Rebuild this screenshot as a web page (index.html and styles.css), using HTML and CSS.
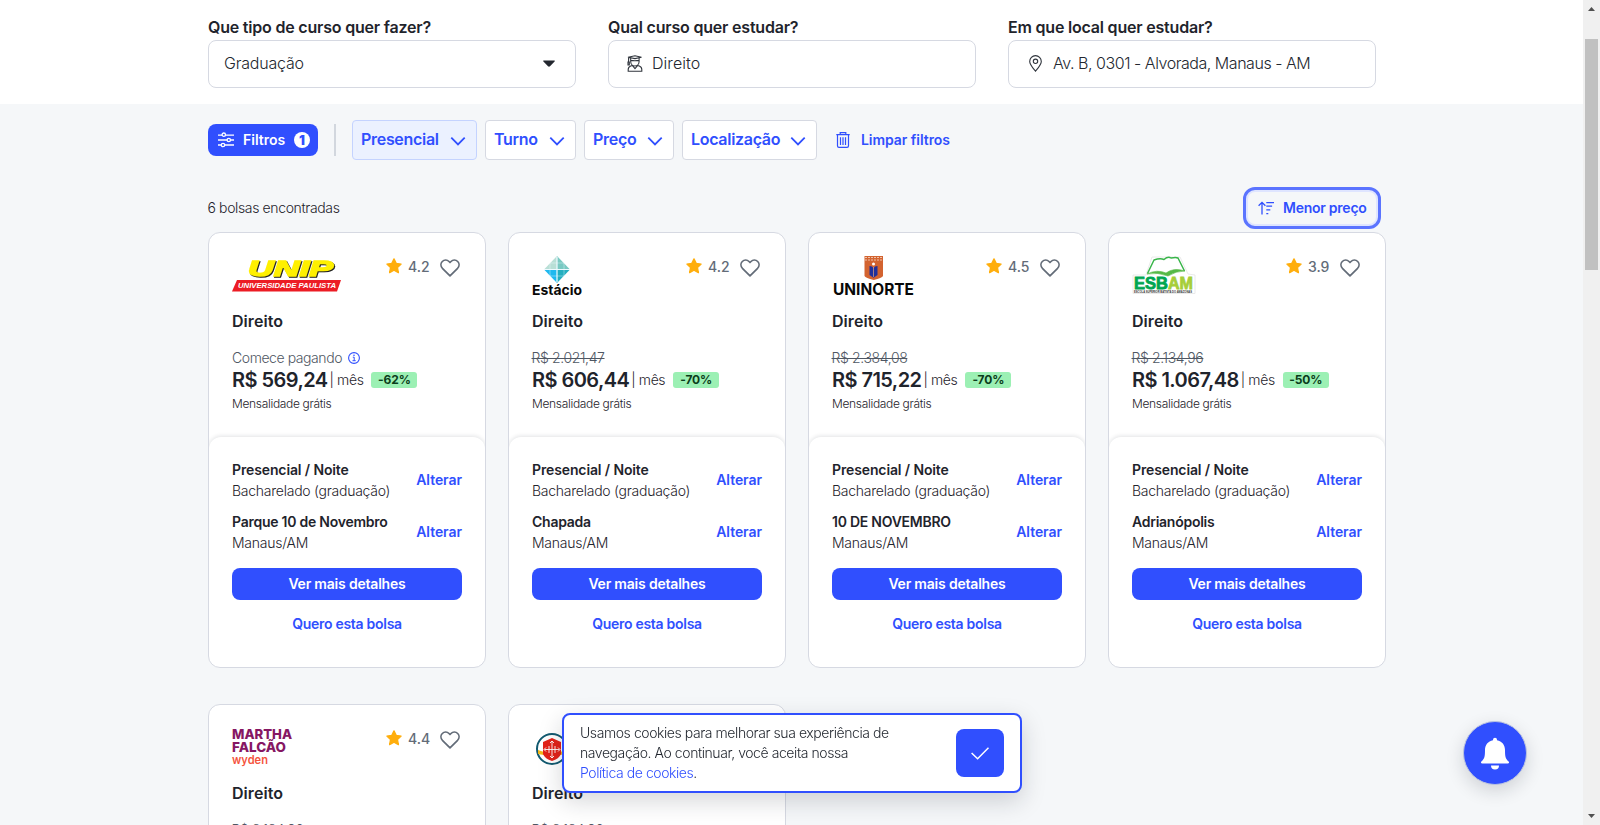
FILE: index.html
```html
<!DOCTYPE html>
<html lang="pt-BR">
<head>
<meta charset="utf-8">
<title>Bolsas de estudo</title>
<link rel="stylesheet" href="styles.css">
</head>
<body>
<svg class="sprite" aria-hidden="true">
  <symbol id="star" viewBox="0 0 16 16"><path d="M8 .9l2.200 4.500 4.900.7-3.600 3.500.9 5L8 12.200l-4.400 2.400.9-5L.9 6.100l4.900-.7z" fill="#ffae0d" stroke="#ffae0d" stroke-width="1.300" stroke-linejoin="round"/></symbol>
  <symbol id="heart" viewBox="0 0 20 18"><path d="M10 16.900L2.400 9.300C.5 7.200.5 4.300 2.300 2.500 4.200.6 7.200.7 9 2.500l1 1 1-1c1.800-1.800 4.800-1.900 6.700 0 1.800 1.800 1.800 4.700-.1 6.800z" fill="none" stroke="#636c78" stroke-width="1.700" stroke-linejoin="round"/></symbol>
  <symbol id="chev" viewBox="0 0 16 16"><path d="M1.300 4.700L8 11.400l6.700-6.700" fill="none" stroke="#304ffe" stroke-width="1.800"/></symbol>
  <symbol id="info" viewBox="0 0 12 12"><circle cx="6" cy="6" r="5.400" fill="none" stroke="#304ffe" stroke-width="1.100"/><path d="M4.800 5.200H6.200V8.700M4.500 8.700H7.700" fill="none" stroke="#304ffe"/><circle cx="6" cy="3.300" r=".8" fill="#304ffe"/></symbol>
</svg>
<div class="window">
  <div class="page">
    <header class="search">
      <label class="field"><span class="label">Que tipo de curso quer fazer?</span>
        <span class="input select"><span>Graduação</span><svg width="12" height="7" viewBox="0 0 12 7"><path d="M.8.400h10.400c.6 0 .8.600.4 1L7 6.200c-.6.600-1.400.600-2 0L.4 1.400C0 1 .200.400.8.400z" fill="#23272f"/></svg></span></label>
      <label class="field"><span class="label">Qual curso quer estudar?</span>
        <span class="input icon"><svg width="16" height="17" viewBox="0 0 16 17" fill="none" stroke="#30353d" stroke-width="1.100"><path d="M1 2.200L8 .7l6.500 1.500L8 3.600zM3.700 3.200v3.300c0 2.600 1.900 4.500 4.200 4.500s4.200-1.900 4.200-4.500V3.200M3.700 5.400c2.800.5 5.600.5 8.400 0M1.600 2.500v4.200M1 7h1.300v3H1zM1.200 16.300v-1.700c0-1.600.9-2.900 2.500-3.500l1.600-.6L8 13.600l2.700-3.100 1.600.6c1.600.6 2.500 1.900 2.500 3.500v1.700z"/></svg><span class="course">Direito</span></span></label>
      <label class="field"><span class="label">Em que local quer estudar?</span>
        <span class="input icon"><svg class="pin" width="13" height="17" viewBox="0 0 13 17" fill="none" stroke="#30353d" stroke-width="1.100"><path d="M6.500 16.200C3.500 12.500.7 9.400.7 6.400a5.800 5.800 0 0 1 11.600 0c0 3-2.800 6.100-5.800 9.800z"/><circle cx="6.500" cy="6.300" r="2.200"/></svg><span class="addr">Av. B, 0301 - Alvorada, Manaus - AM</span></span></label>
    </header>
    <main>
      <nav class="filters">
        <button class="filtros"><svg width="16" height="16" viewBox="0 0 16 16" fill="#304ffe" stroke="#fff" stroke-width="1.300"><path d="M0 3.200h16M0 8h16M0 13h16"/><circle cx="5.800" cy="2.700" r="1.700"/><circle cx="10.800" cy="8" r="1.700"/><circle cx="5" cy="13" r="1.700"/></svg><span>Filtros</span><b>1</b></button>
        <i class="rule"></i>
        <div class="chips">
          <button class="chip on"><span>Presencial</span><svg><use href="#chev"/></svg></button>
          <button class="chip turno"><span>Turno</span><svg><use href="#chev"/></svg></button>
          <button class="chip preco"><span>Preço</span><svg><use href="#chev"/></svg></button>
          <button class="chip local"><span>Localização</span><svg><use href="#chev"/></svg></button>
        </div>
        <button class="clear"><svg width="14" height="16" viewBox="0 0 14 16" fill="none" stroke="#304ffe" stroke-width="1.200"><path d="M.3 2.700h13.400M4.200 2.500V.7h5.600v1.800M1.500 3v10.800c0 1 .6 1.600 1.500 1.600h8c.9 0 1.500-.6 1.500-1.600V3M4.500 5.300v7.800M7 5.300v7.800M9.500 5.300v7.800"/></svg><span>Limpar filtros</span></button>
      </nav>
      <div class="summary"><span class="count">6 bolsas encontradas</span>
        <button class="sort"><svg width="16" height="14" viewBox="0 0 16 14" fill="none" stroke="#304ffe" stroke-width="1.300"><path d="M4 13.500V1.500M.6 4.700L4 1.300l3.400 3.400M8.300 1.600H16M8.300 5.200h5.800M8.300 8.900h4M8.300 12.600h2"/></svg><span>Menor preço</span></button></div>
      <section class="grid" id="offers"></section>
    </main>
    <aside class="cookies"><p>Usamos cookies para melhorar sua experiência de<br>navegação. Ao continuar, você aceita nossa<br><a>Política de cookies</a>.</p>
      <button class="ok"><svg width="18" height="13" viewBox="0 0 18 13"><path d="M.6 6l6 5.800L17.500.8" fill="none" stroke="#fff" stroke-width="1.500"/></svg></button></aside>
    <button class="bell"><svg width="28" height="33" viewBox="0 0 28 33" fill="#fff"><path d="M12 2.800a2 2 0 0 1 4 0v.5c5 1 8 4.700 8 9.700 0 6 .3 8.600 3.600 11.500.9.900.3 2.000-.8 2.000H1.200c-1.100 0-1.700-1.100-.8-2C3.700 21.600 4 19 4 13c0-5 3-8.700 8-9.700z"/><path d="M10 28.500h8a4 4 0 0 1-8 0z"/></svg></button>
  </div>
  <div class="scrollbar"><svg width="7" height="4"><path d="M0 4L3.500 0 7 4z" fill="#505050"/></svg><i></i><svg class="down" width="7" height="4"><path d="M0 0L3.500 4 7 0z" fill="#505050"/></svg></div>
</div>
<script src="script.js"></script>
</body>
</html>
```
FILE: styles.css
```css
* { box-sizing: border-box; }
body { margin: 0; height: 825px; overflow: hidden; font-family: Inter, "Open Sans", sans-serif; font-size: 14px; line-height: 21px; color: #1f242c; }
button { font: inherit; border: 0; background: none; padding: 0; color: #304ffe; white-space: nowrap; }
svg { display: block; flex: none; }
.sprite { width: 0; height: 0; position: absolute; }
.window { display: flex; height: 825px; }
.page { flex: 1; background: #f5f7f9; overflow: hidden; height: 825px; }
.search { height: 104px; background: #fff; padding: 15px 0 0 208px; display: flex; gap: 32px; }
.field { width: 368px; display: flex; flex-direction: column; gap: 1px; }
.label { font-size: 16px; line-height: 24px; font-weight: 600; white-space: nowrap; letter-spacing: -.2px; }
.input { height: 48px; border: 1px solid #d6d9e2; border-radius: 8px; background: #fff; display: flex; align-items: center; padding: 0 16px 2px 15px; font-size: 16px; font-weight: 300; color: #23272f; letter-spacing: -.2px; }
.select { justify-content: space-between; padding-right: 20px; }
.input.icon { padding-left: 18px; gap: 9px; }
.course { letter-spacing: .05px; }
.pin { margin: 0 3px 0 2px; width: 13px; }
.addr { margin-left: -1px; letter-spacing: -.46px; }
main { padding: 16px 0 0 208px; }
.filters { display: flex; align-items: center; height: 40px; }
.filtros { width: 110px; height: 32px; background: #304ffe; border-radius: 8px; color: #fff; display: flex; align-items: center; padding: 0 8px 0 10px; font-weight: 600; }
.filtros svg { margin-right: 9px; }
.filtros span, .clear span, .sort span { padding-bottom: 2px; }
.filtros b { margin-left: auto; width: 16px; height: 16px; border-radius: 8px; background: #fff; color: #304ffe; font-size: 13px; line-height: 16px; text-align: center; }
.rule { width: 2px; height: 32px; background: #d2d7de; margin: 0 16px; }
.chips { display: flex; gap: 8px; }
.chip { height: 40px; width: 125px; border: 1px solid #d6d9e2; border-radius: 4px; background: #fff; display: flex; align-items: center; justify-content: space-between; padding: 0 10px 1px 8px; font-size: 16px; font-weight: 600; letter-spacing: -.3px; }
.chip svg { width: 16px; height: 16px; margin-top: 2px; }
.chip.on { background: #ebf1ff; border-color: #c4d3ff; }
.chip.turno { width: 91px; }
.chip.preco { width: 90px; }
.chip.local { width: 135px; }
.clear { display: flex; align-items: center; gap: 11px; margin-left: 19px; font-weight: 600; letter-spacing: -.05px; }
.summary { display: flex; justify-content: space-between; align-items: center; height: 42px; width: 1173px; margin-top: 27px; }
.count { font-weight: 300; letter-spacing: -.37px; padding-bottom: 2px; margin-left: -.5px; }
.sort { width: 138px; height: 42px; border: 3px solid #5b74ff; border-radius: 12px; box-shadow: inset 0 0 0 2px #dfe5ff; display: flex; align-items: center; padding-left: 12px; gap: 9px; font-weight: 600; letter-spacing: -.25px; }
.grid { display: grid; grid-template-columns: repeat(4, 278px); gap: 36px 22px; margin-top: 3px; }
.card { height: 436px; border: 1px solid #d6d9e2; border-radius: 12px; background: #fff; overflow: hidden; display: flex; flex-direction: column; }
.top { height: 204px; padding: 23px 23px 0; }
.head { display: flex; height: 40px; }
.logo { overflow: visible; }
.unip { filter: drop-shadow(1px 1px 0 #222); }
.rating { margin-left: auto; display: flex; align-items: center; height: 20px; font-weight: 500; color: #636c78; padding-right: 2px; }
.rating .star { width: 16px; height: 16px; margin-right: 6px; }
.rating .heart { width: 20px; height: 18px; margin: 4px 0 0 11px; }
.rating span { width: 21px; letter-spacing: 0; }
h3 { margin: 13px 0 0; font-size: 16px; line-height: 24px; font-weight: 600; letter-spacing: .05px; }
.old { margin-top: 14px; height: 21px; display: flex; align-items: center; gap: 6px; font-weight: 300; color: #4f5763; white-space: nowrap; }
.old s { letter-spacing: -.38px; margin-left: -.5px; }
.start { letter-spacing: -.43px; }
.price { display: flex; align-items: center; height: 24px; white-space: nowrap; }
.price strong { font-size: 20px; font-weight: 600; letter-spacing: -.55px; }
.price .per { font-weight: 300; padding: 0 0 1px 2px; letter-spacing: -.4px; }
.price em { margin: 0 0 1px 8px; width: 46px; height: 16px; border-radius: 3px; background: #9cf0b4; color: #0b3d1b; font: 700 12px/16px Inter, sans-serif; text-align: center; letter-spacing: -.1px; }
.free { font-size: 12px; line-height: 18px; margin-top: 3px; font-weight: 300; letter-spacing: -.33px; }
.bottom { flex: 1; border-radius: 12px 12px 0 0; box-shadow: 0 -1px 4px rgba(20, 25, 40, .12); padding: 22px 23px 0; display: flex; flex-direction: column; }
.row { display: flex; justify-content: space-between; align-items: center; height: 42px; margin-bottom: 10px; white-space: nowrap; }
.row p { margin: 0; font-weight: 300; letter-spacing: -.25px; }
.row b { font-weight: 600; letter-spacing: -.12px; }
.row .place { letter-spacing: -.25px; }
.row a, .want { color: #304ffe; font-weight: 600; letter-spacing: -.05px; }
.row a { padding-bottom: 2px; }
.more { height: 32px; margin-top: 5px; border-radius: 8px; background: #304ffe; color: #fff; font-weight: 600; letter-spacing: -.2px; padding-bottom: 1px; }
.want { text-align: center; margin-top: 13px; letter-spacing: -.28px; }
.cookies { position: fixed; left: 562px; top: 713px; width: 460px; height: 80px; border: 2px solid #304ffe; border-radius: 8px; background: #fff; box-shadow: 0 8px 24px rgba(20, 25, 40, .18); display: flex; justify-content: space-between; align-items: center; padding: 0 16px; }
.cookies p { margin: 0; line-height: 20px; font-weight: 300; white-space: nowrap; letter-spacing: -.43px; }
.cookies a { color: #304ffe; }
.ok { width: 48px; height: 48px; border-radius: 8px; background: #304ffe; display: flex; align-items: center; justify-content: center; }
.bell { position: fixed; left: 1463px; top: 721px; width: 64px; height: 64px; border: 1px solid #b9c2df; border-radius: 50%; background: #304ffe; box-shadow: 0 6px 18px rgba(20, 25, 40, .16); display: flex; align-items: center; justify-content: center; }
.scrollbar { width: 17px; background: #f0f0f0; display: flex; flex-direction: column; align-items: center; padding: 7px 0; }
.scrollbar i { width: 13px; height: 231px; margin-top: 28px; background: #c1c1c1; }
.scrollbar .down { margin-top: auto; }
```
FILE: script.js
```javascript
const logos = {
  unip: `<svg class="logo" width="110" height="40" viewBox="0 0 110 40"><g font-family="Liberation Sans" font-weight="700" font-style="italic"><text class="unip" x="16" y="19.500" font-size="22" textLength="85" lengthAdjust="spacingAndGlyphs" fill="#fff000" stroke="#fff000" stroke-width="1.500">UNIP</text><path d="M5 24h104l-4 11.500H0z" fill="#ec1c24"/><text x="6" y="32.300" font-size="7.500" textLength="98" lengthAdjust="spacingAndGlyphs" fill="#fff">UNIVERSIDADE PAULISTA</text></g></svg>`,
  estacio: `<svg class="logo" width="50" height="42" viewBox="0 0 50 42"><path d="M25 0L38 13.500H25z" fill="#79c9c2"/><path d="M25 0L12 13.500H25z" fill="#b8dfd6"/><path d="M12 13.500L25 27V13.500z" fill="#20b9ef"/><path d="M25 13.500H38L25 27z" fill="#24afc0"/><path d="M12 13.500H38M25 1V26" stroke="#eefaff" stroke-width="1.200"/><path d="M18 7h14v13H18z" stroke="#eefaff" fill="none" stroke-width=".4"/><text x="0" y="39.300" font-family="Inter" font-weight="700" font-size="13.500" textLength="50" lengthAdjust="spacingAndGlyphs" fill="#080808">Estácio</text></svg>`,
  uninorte: `<svg class="logo" width="83" height="40" viewBox="0 0 83 40"><path d="M32.500 0H51v20q-1 2-9.250 4-8.250-2-9.250-4z" fill="#d36330"/><path d="M33 1.500h17.500M33 4h17.500" stroke="#efc1a8" stroke-dasharray="2 1" fill="none"/><path d="M37.500 10q3 0 4 2 1-2 4-2v9l-4 2.800-4-2.800z" fill="#20309b"/><path d="M41.500 11v10" stroke="#e8a27c" stroke-width=".7"/><circle cx="41.500" cy="8" r="1.500" fill="#fff"/><text x="1" y="39.300" font-family="Inter" font-weight="700" font-size="15.500" textLength="81" lengthAdjust="spacingAndGlyphs" fill="#080808">UNINORTE</text></svg>`,
  esbam: `<svg class="logo" width="63" height="40" viewBox="0 0 63 40"><path d="M20 1L48 1 56 18 63 19V37.500H1V19H14z" fill="#fff" stroke="#e5e5e5" stroke-width=".8"/><path d="M15.500 17.500L22 4q6-2 10-.5Q36 0 39 2q5-1 7 0l6.500 13" fill="none" stroke="#39b54a" stroke-width="1.500"/><path d="M15 18q10-5 19-1 8-6 19-2-9 0-17 5-10-4-21-2z" fill="#56b947" stroke="#56b947" stroke-width=".6"/><g font-family="Liberation Sans" font-weight="700"><text x="2" y="33" font-size="16.500" textLength="34" lengthAdjust="spacingAndGlyphs" fill="#00a651" stroke="#00a651" stroke-width=".8">ESB</text><text x="36" y="33" font-size="16.500" textLength="25" lengthAdjust="spacingAndGlyphs" fill="#a6ce39" stroke="#a6ce39" stroke-width=".8">AM</text><text x="2" y="36.800" font-size="3" textLength="58" lengthAdjust="spacingAndGlyphs" fill="#333">ESCOLA SUPERIOR BATISTA DO AMAZONAS</text></g></svg>`,
  martha: `<svg class="logo" width="62" height="42" viewBox="0 0 62 42"><g font-family="Inter" font-weight="800" font-size="13.500" fill="#861763"><text x="0" y="10.500" textLength="60" lengthAdjust="spacingAndGlyphs">MARTHA</text><text x="0" y="24.300" textLength="54" lengthAdjust="spacingAndGlyphs">FALCÃO</text></g><text x="0" y="36" font-family="Inter" font-weight="600" font-size="11.500" textLength="36" lengthAdjust="spacingAndGlyphs" fill="#f5533d">wyden</text></svg>`,
  crest: `<svg class="logo" width="40" height="40" viewBox="0 0 40 40"><circle cx="20" cy="21" r="15" fill="#fff" stroke="#125a70" stroke-width="2"/><path d="M6 22l6 2v3l-6-1zM34 22l-6 2v3l6-1z" fill="#f3b719"/><path d="M20 10l9 4v12q-2 5-9 7-7-2-9-7V14z" fill="#e32219"/><path d="M20 13v17M12.500 21.500h15M18 15l2-2 2 2M18 28l2 2 2-2M14 19.500l-2 2 2 2M26 19.500l2 2-2 2M17 18v7M23 18v7" stroke="#fff" stroke-width=".9" fill="none"/></svg>`
};

const offers = [
  { logo: "unip", rating: "4.2", price: "R$ 569,24", off: "-62%", place: "Parque 10 de Novembro" },
  { logo: "estacio", rating: "4.2", old: "R$ 2.021,47", price: "R$ 606,44", off: "-70%", place: "Chapada" },
  { logo: "uninorte", rating: "4.5", old: "R$ 2.384,08", price: "R$ 715,22", off: "-70%", place: "10 DE NOVEMBRO" },
  { logo: "esbam", rating: "3.9", old: "R$ 2.134,96", price: "R$ 1.067,48", off: "-50%", place: "Adrianópolis" },
  { logo: "martha", rating: "4.4", old: "R$ 2.134,96", price: "R$ 1.067,48", off: "-50%", place: "Adrianópolis" },
  { logo: "crest", rating: "4.4", old: "R$ 2.134,96", price: "R$ 1.067,48", off: "-50%", place: "Adrianópolis" }
];

document.getElementById("offers").innerHTML = offers.map(o => `
  <article class="card">
    <div class="top">
      <div class="head">${logos[o.logo]}
        <div class="rating"><svg class="star"><use href="#star"/></svg><span>${o.rating}</span><svg class="heart"><use href="#heart"/></svg></div>
      </div>
      <h3>Direito</h3>
      <div class="old">${o.old ? `<s>${o.old}</s>` : `<span class="start">Comece pagando</span><svg width="12" height="12"><use href="#info"/></svg>`}</div>
      <div class="price"><strong>${o.price}</strong><span class="per">| mês</span><em>${o.off}</em></div>
      <div class="free">Mensalidade grátis</div>
    </div>
    <div class="bottom">
      <div class="row"><p><b>Presencial / Noite</b><br>Bacharelado (graduação)</p><a>Alterar</a></div>
      <div class="row"><p><b class="place">${o.place}</b><br>Manaus/AM</p><a>Alterar</a></div>
      <button class="more">Ver mais detalhes</button>
      <a class="want">Quero esta bolsa</a>
    </div>
  </article>`).join("");
```
